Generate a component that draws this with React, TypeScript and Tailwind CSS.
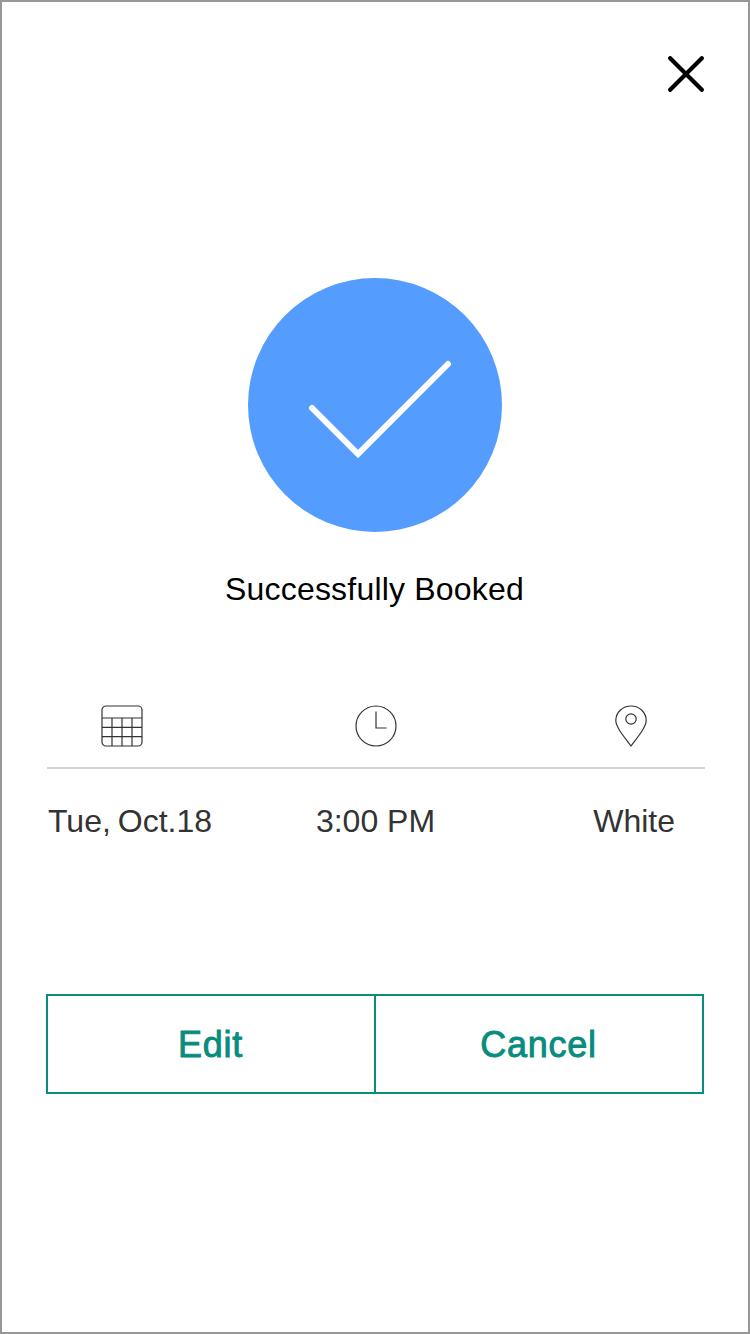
import type { ReactNode } from 'react';

function CloseIcon() {
  return (
    <svg width="36" height="36" viewBox="0 0 36 36" fill="none" stroke="#000" strokeWidth="4.200" strokeLinecap="round">
      <path d="M2.200 2.200 33.800 33.800M33.800 2.200 2.200 33.800" />
    </svg>
  );
}

function CheckBadge() {
  return (
    <svg width="254" height="254" viewBox="0 0 254 254" fill="none">
      <circle cx="127" cy="127" r="127" fill="#549DFF" />
      <path d="M64 130 110 176 200 86" stroke="#fff" strokeWidth="6" strokeLinecap="round" strokeLinejoin="miter" />
    </svg>
  );
}

function CalendarIcon() {
  return (
    <svg width="42" height="42" viewBox="0 0 42 42" fill="none" stroke="#333" strokeWidth="1.200">
      <rect x="1" y="1" width="40" height="40" rx="4" />
      <path d="M1 13H41M1 22.400H41M1 31.600H41M11 13V41M21 13V41M31 13V41" />
    </svg>
  );
}

function ClockIcon() {
  return (
    <svg width="42" height="42" viewBox="0 0 42 42" fill="none" stroke="#333" strokeWidth="1.200">
      <circle cx="21" cy="21" r="20" />
      <path d="M21 6.500V23H31.500" />
    </svg>
  );
}

function PinIcon() {
  return (
    <svg width="42" height="42" viewBox="0 0 42 42" fill="none" stroke="#333" strokeWidth="1.200">
      <path d="M21 41C18 36.800 13.500 31.500 10 26C7.300 21.800 5.800 18.800 5.800 15.600C5.800 7.500 12.500 1 21 1S36.200 7.500 36.200 15.600C36.200 18.800 34.700 21.800 32 26C28.500 31.500 24 36.800 21 41Z" />
      <circle cx="21" cy="14" r="5.200" />
    </svg>
  );
}

function ActionButton({ children }: { children: ReactNode }) {
  return (
    <button className="flex-1 pt-px pr-px text-[36px] leading-[40px] tracking-[0.700px] text-[#078C7E] [-webkit-text-stroke:0.9px_#078C7E]">
      {children}
    </button>
  );
}

export default function App() {
  return (
    <main className="flex h-[1334px] w-[750px] flex-col border-2 border-[#979797] bg-white px-[44px] font-['Liberation_Sans',Arial,sans-serif] text-[32px] leading-[36px] text-black">
      <header className="flex justify-end pt-[54px]">
        <button aria-label="Close">
          <CloseIcon />
        </button>
      </header>

      <section className="mt-[186px] flex flex-col items-center">
        <CheckBadge />
        <h1 className="mt-[39px] pr-px tracking-[0.2px]">Successfully Booked</h1>
      </section>

      <section className="mt-[98px] ml-px w-[658px] text-[#333]">
        <div className="flex gap-[212px] border-b-2 border-[#D4D4D4] pb-5 pl-[54px]">
          <CalendarIcon />
          <ClockIcon />
          <div className="pl-px">
            <PinIcon />
          </div>
        </div>
        <div className="flex justify-between pt-[34px] pr-[30px] pl-px">
          <span className="w-[180px] [word-spacing:-2px]">Tue, Oct.18</span>
          <span className="w-[180px] pl-[28px] text-center whitespace-nowrap">3:00 PM</span>
          <span className="w-[180px] text-right">White</span>
        </div>
      </section>

      <div className="mt-[155px] flex h-[100px] w-[658px] divide-x-2 divide-[#078C7E] border-2 border-[#078C7E]">
        <ActionButton>Edit</ActionButton>
        <ActionButton>Cancel</ActionButton>
      </div>
    </main>
  );
}
